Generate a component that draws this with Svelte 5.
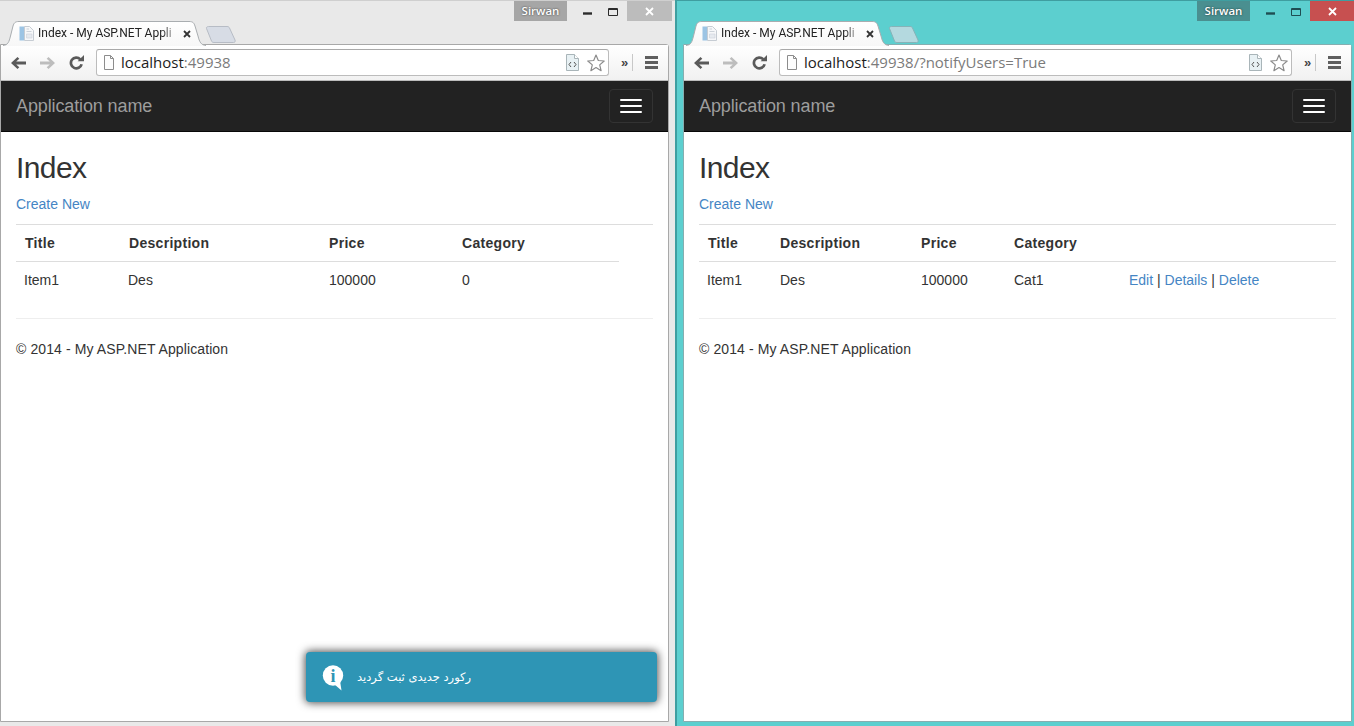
<script>
  const windows = [
    {
      key: 'gray',
      path: '',
      cols: [104, 201, 133, 165, 34],
      head: ['Title', 'Description', 'Price', 'Category', ''],
      row: ['Item1', 'Des', '100000', '0'],
      actions: false,
      toast: true
    },
    {
      key: 'teal',
      path: '/?notifyUsers=True',
      cols: [73, 141, 93, 115, 215],
      head: ['Title', 'Description', 'Price', 'Category', ''],
      row: ['Item1', 'Des', '100000', 'Cat1'],
      actions: true,
      toast: false
    }
  ];
</script>

<div class="desktop">
  {#each windows as w (w.key)}
    <section class="win {w.key}">
      <div class="caption">
        <span class="user">Sirwan</span>
        <div class="controls">
          <svg width="9" height="3" viewBox="0 0 9 3" class="min"><rect width="9" height="2.4" y="0.3" /></svg>
          <svg width="10" height="8" viewBox="0 0 10 8" class="max"><path d="M.5 .5h9v7h-9zM.5 1.500h9" /></svg>
        </div>
        <button class="close" aria-label="Close">
          <svg width="9" height="9" viewBox="0 0 9 9"><path d="M1 1l7 7M8 1l-7 7" /></svg>
        </button>
      </div>

      <div class="strip">
        <div class="tab">
          <svg class="tab-shape" width="203" height="25" viewBox="0 0 203 25">
            <defs>
              <linearGradient id="tabfill-{w.key}" x1="0" x2="0" y1="0" y2="1">
                <stop offset="0" stop-color="#ffffff" />
                <stop offset="1" stop-color="#f7f7f7" />
              </linearGradient>
            </defs>
            <path d="M0 24.5C5 24 6 21 7.500 15L10 5C11 2 12 .5 16 .5H186C190 .5 191 2 192 5L195 15C196.500 21 198 24 203 24.500V25H0Z" fill="url(#tabfill-{w.key})" stroke="none" />
            <path d="M0 24.5C5 24 6 21 7.500 15L10 5C11 2 12 .5 16 .5H186C190 .5 191 2 192 5L195 15C196.500 21 198 24 203 24.500" fill="none" stroke="#a9adb0" />
          </svg>
          <svg class="favicon" width="15" height="15" viewBox="0 0 15 15">
            <rect x="0.5" y="0.5" width="5" height="14" fill="#9cc4e4" />
            <path d="M5.500 .5h5l4 4v10h-9z" fill="#f6f7f9" stroke="#c6ccd3" />
            <path d="M7.500 8h5.500v4H7.500z" fill="#e6eaef" stroke="#ccd2d9" stroke-width=".6" />
            <path d="M7.500 3h2.500M7.500 5.500h5" stroke="#ccd2d9" fill="none" />
          </svg>
          <span class="tab-title">Index - My ASP.NET Appli</span>
          <svg class="tab-x" width="8" height="8" viewBox="0 0 8 8"><path d="M1 1l6 6M7 1l-6 6" /></svg>
        </div>
        <svg class="newtab" width="32" height="17" viewBox="0 0 32 17">
          <path d="M1.500 2.500C1 1.500 2 .5 3.500 .5H22C23.500 .5 24 1 24.500 2L30 14C30.500 15.500 30 16.500 28.500 16.500H9C7.500 16.500 7 16 6.500 15Z" />
        </svg>
      </div>

      <div class="frame">
        <div class="toolbar">
          <svg width="15" height="12" viewBox="0 0 15 12" class="nav-ic"><path d="M6.500 0L0 6l6.500 6 1.800-1.700L5.200 7.500H15v-3H5.200l3.100-2.800z" fill="#5a5a5a" /></svg>
          <svg width="15" height="12" viewBox="0 0 15 12" class="nav-ic"><path d="M8.500 0L15 6l-6.500 6-1.800-1.700 3.100-2.800H0v-3h9.800L6.700 1.700z" fill="#bdbdbd" /></svg>
          <svg width="15" height="15" viewBox="0 0 15 15" class="nav-ic"><path d="M11.300 4.300A5.400 5.400 0 1 0 12.600 9.200" fill="none" stroke="#5a5a5a" stroke-width="2.700" /><path d="M8.600 6.300H15V0z" fill="#5a5a5a" /></svg>
          <div class="omni">
            <svg width="10" height="15" viewBox="0 0 10 15" class="page"><path d="M.5 .5h6l3 3v11h-9z" fill="#fdfdfd" stroke="#8c8c8c" /><path d="M6.500 .5v3h3" fill="none" stroke="#8c8c8c" /></svg>
            <span class="url"><span class="host">localhost</span><span class="rest">:49938{w.path}</span></span>
            <svg width="13" height="17" viewBox="0 0 13 17" class="doc"><path d="M.5 .5h8l4 4v12H.5z" fill="#e8f1f4" stroke="#a9b5b9" /><path d="M8.500 .5v4h4" fill="#fff" stroke="#a9b5b9" /><path d="M5 8L3 10.500 5 13M8 8l2 2.500L8 13" fill="none" stroke="#555" /></svg>
            <svg width="18" height="18" viewBox="0 0 18 18" class="star"><path d="M9 1l2.300 5.500 5.900.5-4.500 3.900 1.400 5.800L9 13.600l-5.100 3.100 1.400-5.800L.8 7l5.900-.5z" fill="#fff" stroke="#8b8b8b" stroke-width="1.200" stroke-linejoin="round" /></svg>
          </div>
          <span class="more">»</span>
          <span class="divider"></span>
          <svg width="13" height="13" viewBox="0 0 13 13" class="menu"><path d="M0 0h13v3H0zM0 5h13v3H0zM0 10h13v3H0z" fill="#5f5f5f" /></svg>
        </div>

        <div class="viewport">
          <nav class="navbar">
            <a class="brand" href="#top">Application name</a>
            <button class="toggle" aria-label="Toggle navigation"><i></i><i></i><i></i></button>
          </nav>

          <main class="body">
            <h2>Index</h2>
            <p class="create"><a href="#top">Create New</a></p>
            <table style="width: {w.cols.reduce((a, b) => a + b, 0)}px">
              <colgroup>
                {#each w.cols as c}<col style="width: {c}px" />{/each}
              </colgroup>
              <tbody>
                <tr>
                  {#each w.head as h}<th>{h}</th>{/each}
                </tr>
                <tr>
                  {#each w.row as cell}<td>{cell}</td>{/each}
                  {#if w.actions}
                    <td><a href="#top">Edit</a> | <a href="#top">Details</a> | <a href="#top">Delete</a></td>
                  {/if}
                </tr>
              </tbody>
            </table>
            <hr />
            <footer>© 2014 - My ASP.NET Application</footer>
          </main>

          {#if w.toast}
            <div class="toast">
              <svg width="22" height="26" viewBox="0 0 22 26">
                <circle cx="11" cy="10.500" r="10.200" fill="#fff" />
                <path d="M12 19L18 16L19.500 25.500Z" fill="#fff" />
                <text x="11" y="16.500" text-anchor="middle">i</text>
              </svg>
              <span dir="rtl" lang="fa">رکورد جدیدی ثبت گردید</span>
            </div>
          {/if}
        </div>
      </div>
    </section>
  {/each}
</div>

<style>
  :global(body) {
    margin: 0;
    background: #e9e9e9;
    overflow: hidden;
  }

  .desktop {
    display: flex;
    width: 1354px;
    height: 726px;
    overflow: hidden;
    font-family: "Liberation Sans", Arial, sans-serif;
    font-size: 14px;
    line-height: 20px;
    color: #333;
  }

  .win {
    box-sizing: border-box;
    height: 726px;
    display: flex;
    flex-direction: column;
    flex: none;
  }

  .win.gray {
    width: 675px;
    background: #e9e9e9;
    border-top: 1px solid #cfcfcf;
    --user: #a6a6a6;
    --close: #bcbcbc;
    --close-w: 45px;
    --icon: #2b2b2b;
    --frame: #a8a8a8;
    --newtab: #d7dce5;
    --newtab-line: #b7bcc5;
    padding-right: 6px;
  }

  .win.teal {
    width: 679px;
    background: #5ccfcf;
    border-top: 1px solid #3f9ea0;
    border-left: 2px solid #3f9ea0;
    padding-left: 6px;
    --user: #4a8f90;
    --close: #c75050;
    --close-w: 44px;
    --icon: #1f4d52;
    --frame: #86aeb0;
    --newtab: #b4d9df;
    --newtab-line: #86b3b8;
  }

  /* caption row */
  .caption {
    height: 20px;
    display: flex;
    justify-content: flex-end;
    align-items: stretch;
    flex: none;
  }
  .gray .caption { margin-right: -3px; }

  .user {
    width: 53px;
    background: var(--user);
    color: #fff;
    font-family: "Open Sans", sans-serif;
    font-size: 11.500px;
    font-weight: 600;
    line-height: 20px;
    text-align: center;
    text-shadow: 0 0 2px rgba(0, 0, 0, 0.7);
  }
  .controls {
    width: 60px;
    display: flex;
    align-items: flex-start;
  }
  .min { margin: 11px 0 0 16px; fill: var(--icon); }
  .max { margin: 7px 0 0 16px; fill: none; stroke: var(--icon); }
  .close {
    width: var(--close-w);
    border: 0;
    padding: 0;
    background: var(--close);
    display: flex;
    align-items: center;
    justify-content: center;
  }
  .close path { stroke: #fff; stroke-width: 1.800; fill: none; }

  /* tabs */
  .strip {
    height: 24px;
    display: flex;
    align-items: flex-start;
    flex: none;
    padding-left: 3px;
  }
  .tab {
    position: relative;
    width: 203px;
    height: 24px;
    display: flex;
    align-items: center;
    z-index: 1;
  }
  .tab-shape { position: absolute; left: 0; top: 0; }
  .favicon { position: relative; margin-left: 16px; flex: none; }
  .tab-title {
    position: relative;
    margin-left: 4px;
    width: 137px;
    white-space: nowrap;
    overflow: hidden;
    font-family: Roboto, sans-serif;
    font-size: 12px;
    line-height: 16px;
    color: #222;
    -webkit-mask-image: linear-gradient(to right, #000 90%, rgba(0, 0, 0, 0.25));
    mask-image: linear-gradient(to right, #000 90%, rgba(0, 0, 0, 0.25));
  }
  .tab-x {
    position: relative;
    margin-left: 8px;
    flex: none;
    margin-top: 1px;
  }
  .tab-x path { stroke: #333; stroke-width: 1.800; fill: none; }
  .newtab { margin: 5px 0 0 -1px; flex: none; }
  .newtab path { fill: var(--newtab); stroke: var(--newtab-line); }

  /* browser frame */
  .frame {
    box-sizing: border-box;
    width: 669px;
    height: 678px;
    margin-top: -1px;
    flex: none;
    border: 1px solid var(--frame);
    border-top-right-radius: 3px;
    display: flex;
    flex-direction: column;
    background: #fff;
  }

  .toolbar {
    box-sizing: border-box;
    height: 36px;
    flex: none;
    display: flex;
    align-items: center;
    padding-left: 10px;
    background: linear-gradient(#ffffff, #f1f1f1);
    border-bottom: 1px solid #bdbdbd;
  }
  .nav-ic { margin-right: 14px; flex: none; }
  .nav-ic:nth-of-type(3) { margin-right: 12px; }

  .omni {
    box-sizing: border-box;
    width: 513px;
    height: 27px;
    flex: none;
    display: flex;
    align-items: center;
    padding: 0 3px 0 7px;
    background: #fff;
    border: 1px solid #bcbcbc;
    border-top-color: #a9a9a9;
    border-radius: 3px;
  }
  .page { flex: none; }
  .url {
    margin-left: 7px;
    margin-top: -2px;
    font-family: "Open Sans", sans-serif;
    font-size: 15px;
    white-space: nowrap;
  }
  .host { color: #1c1c1c; }
  .rest { color: #7b7b7b; }
  .doc { margin-left: auto; flex: none; }
  .star { margin-left: 8px; flex: none; }

  .more {
    margin-left: 12px;
    width: 10px;
    font-family: "Liberation Sans", sans-serif;
    font-weight: 700;
    font-size: 13px;
    color: #444;
  }
  .divider {
    width: 1px;
    height: 17px;
    margin-left: 1px;
    background: #c8c8c8;
  }
  .menu { margin-left: 12px; flex: none; }

  .viewport {
    position: relative;
    flex: 1;
    min-height: 0;
  }

  /* bootstrap page */
  .navbar {
    box-sizing: border-box;
    height: 51px;
    display: flex;
    justify-content: space-between;
    align-items: flex-start;
    padding: 0 15px;
    background: #222;
    border-bottom: 1px solid #080808;
  }
  .brand {
    font-size: 18px;
    line-height: 20px;
    padding-top: 15px;
    letter-spacing: -0.12px;
    color: #9d9d9d;
    text-decoration: none;
  }
  .toggle {
    box-sizing: border-box;
    width: 44px;
    height: 34px;
    margin-top: 8px;
    padding: 9px 10px;
    background: transparent;
    border: 1px solid #333;
    border-radius: 4px;
    display: flex;
    flex-direction: column;
    gap: 4px;
  }
  .toggle i {
    display: block;
    width: 22px;
    height: 2px;
    background: #fff;
    border-radius: 1px;
    flex: none;
  }

  .body { padding: 0 15px; }
  h2 {
    margin: 19px 0 10px;
    font-size: 30px;
    font-weight: 500;
    line-height: 33px;
    letter-spacing: -0.6px;
  }
  .create { margin: 0 0 10px; }
  a { color: #4585c4; text-decoration: none; }

  table {
    table-layout: fixed;
    border-collapse: collapse;
    border-spacing: 0;
    margin-bottom: 20px;
  }
  th, td {
    padding: 8px;
    text-align: left;
    vertical-align: top;
    border-top: 1px solid #ddd;
    line-height: 20px;
  }
  th {
    font-weight: 700;
    letter-spacing: 0.3px;
  }
  th:first-child { padding-left: 9px; }
  .gray th:nth-child(2) { padding-left: 9px; }

  hr {
    border: 0;
    border-top: 1px solid #eee;
    margin: 20px 0;
  }
  footer {
    line-height: 20px;
    letter-spacing: 0.1px;
  }

  .toast {
    position: absolute;
    right: 11px;
    bottom: 19px;
    width: 351px;
    height: 50px;
    box-sizing: border-box;
    padding-left: 16px;
    display: flex;
    align-items: center;
    gap: 13px;
    background: #2e95b5;
    border-radius: 4px;
    box-shadow: 0 0 8px 1px rgba(0, 0, 0, 0.7);
    color: #fff;
    font-family: "DejaVu Sans", sans-serif;
    font-size: 11.500px;
  }
  .toast svg { flex: none; margin-top: 1px; }
  .toast text {
    font-family: "Liberation Serif", serif;
    font-size: 18px;
    font-weight: 700;
    fill: #2e95b5;
  }
</style>
